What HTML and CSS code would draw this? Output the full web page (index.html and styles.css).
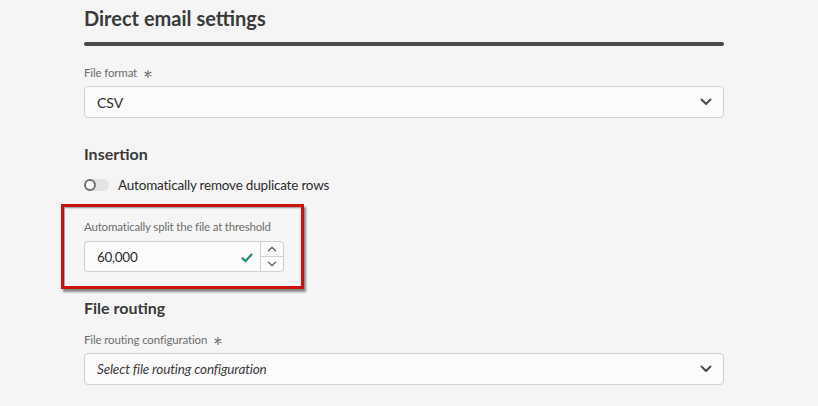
FILE: index.html
```html
<!DOCTYPE html>
<html lang="en">
<head>
<meta charset="utf-8">
<title>Direct email settings</title>
<link rel="stylesheet" href="styles.css">
</head>
<body>
<main class="page">
  <h1 class="title">Direct email settings</h1>
  <div class="divider"></div>

  <div class="field field-format">
    <label class="label">File format <svg class="req" width="8" height="8" viewBox="0 0 8 8"><path d="M4 0.6 V7.4 M1.05 2.3 L6.95 5.7 M1.05 5.7 L6.95 2.3" stroke="#6e6e6e" stroke-width="1.2" stroke-linecap="round"/></svg></label>
    <div class="select">
      <span class="select-value">CSV</span>
      <svg class="chevron" width="12" height="8" viewBox="0 0 12 8"><path d="M1.5 1.5 L6 6 L10.5 1.5" fill="none" stroke="#4b4b4b" stroke-width="2" stroke-linecap="round" stroke-linejoin="round"/></svg>
    </div>
  </div>

  <h2 class="section">Insertion</h2>
  <div class="toggle-row">
    <span class="toggle"><span class="handle"></span></span>
    <span class="toggle-text">Automatically remove duplicate rows</span>
  </div>

  <div class="field field-threshold">
    <div class="highlight"></div>
    <label class="label">Automatically split the file at threshold</label>
    <div class="number">
      <div class="number-input">
        <span class="number-value">60,000</span>
        <svg class="check" width="12" height="10" viewBox="0 0 12 10"><path d="M1.5 5.2 L4.5 8.2 L10.5 1.5" fill="none" stroke="#268e6c" stroke-width="2.2" stroke-linecap="round" stroke-linejoin="round"/></svg>
      </div>
      <div class="stepper">
        <span class="step step-up"><svg width="10" height="6" viewBox="0 0 10 6"><path d="M1.5 4.8 L5 1.3 L8.5 4.8" fill="none" stroke="#6e6e6e" stroke-width="1.5" stroke-linecap="round" stroke-linejoin="round"/></svg></span>
        <span class="step step-down"><svg width="10" height="6" viewBox="0 0 10 6"><path d="M1.5 1.2 L5 4.7 L8.5 1.2" fill="none" stroke="#6e6e6e" stroke-width="1.5" stroke-linecap="round" stroke-linejoin="round"/></svg></span>
      </div>
    </div>
  </div>

  <h2 class="section section-routing">File routing</h2>
  <div class="field field-routing">
    <label class="label">File routing configuration <svg class="req" width="8" height="8" viewBox="0 0 8 8"><path d="M4 0.6 V7.4 M1.05 2.3 L6.95 5.7 M1.05 5.7 L6.95 2.3" stroke="#6e6e6e" stroke-width="1.2" stroke-linecap="round"/></svg></label>
    <div class="select">
      <span class="select-placeholder">Select file routing configuration</span>
      <svg class="chevron" width="12" height="8" viewBox="0 0 12 8"><path d="M1.5 1.5 L6 6 L10.5 1.5" fill="none" stroke="#4b4b4b" stroke-width="2" stroke-linecap="round" stroke-linejoin="round"/></svg>
    </div>
  </div>
</main>
</body>
</html>
```
FILE: styles.css
```css
html, body {
  margin: 0;
  padding: 0;
  background: #f5f5f5;
}
body {
  font-family: "Lato", "Noto Sans", sans-serif;
  color: #2c2c2c;
  height: 406px;
  overflow: hidden;
}
.page {
  width: 640px;
  padding-left: 84px;
  padding-top: 4px;
}
.title {
  margin: 0;
  font-size: 20px;
  line-height: 28px;
  font-weight: 700;
  color: #3a3a3a;
}
.divider {
  margin-top: 10px;
  height: 4px;
  border-radius: 2px;
  background: #4b4b4b;
}
.field {
  display: flex;
  flex-direction: column;
}
.field-format {
  margin-top: 19px;
}
.label {
  font-size: 11.5px;
  letter-spacing: -0.15px;
  line-height: 16px;
  color: #6e6e6e;
  margin-bottom: 5px;
}
.req {
  margin-left: 4px;
  vertical-align: -0.5px;
}
.select {
  box-sizing: border-box;
  height: 32px;
  background: #fbfbfb;
  border: 1px solid #d0d0d0;
  border-radius: 4px;
  display: flex;
  align-items: center;
  justify-content: space-between;
  padding: 0 11px 0 12px;
}
.select-value {
  font-size: 14px;
  color: #2c2c2c;
}
.select-placeholder {
  font-size: 13.5px;
  letter-spacing: -0.15px;
  font-style: italic;
  color: #3a3a3a;
}
.section {
  margin: 26px 0 0;
  font-size: 16px;
  line-height: 20px;
  font-weight: 700;
  color: #3a3a3a;
}
.toggle-row {
  margin-top: 11px;
  height: 20px;
  display: flex;
  align-items: center;
  gap: 9px;
}
.toggle {
  width: 25px;
  height: 12px;
  border-radius: 6px;
  background: #e3e3e3;
  display: flex;
  align-items: center;
}
.handle {
  box-sizing: border-box;
  width: 12px;
  height: 12px;
  border-radius: 50%;
  border: 2px solid #707070;
  background: #ffffff;
}
.toggle-text {
  font-size: 13.5px;
  letter-spacing: -0.2px;
  color: #2c2c2c;
}
.field-threshold {
  position: relative;
  margin-top: 24px;
}
.highlight {
  position: absolute;
  left: -23px;
  top: -15px;
  width: 243px;
  height: 85px;
  box-sizing: border-box;
  border: 3px solid #c8120c;
  box-shadow: inset 1px 1px 0 #a8a8a8, inset 0 2px 1px rgba(0,0,0,0.12), 2px 3px 2px rgba(0,0,0,0.45);
  pointer-events: none;
}
.field-threshold .label {
  letter-spacing: -0.18px;
  margin-bottom: 6px;
}
.number {
  display: flex;
  width: 200px;
  height: 31px;
}
.number-input {
  box-sizing: border-box;
  flex: 1;
  background: #fbfbfb;
  border: 1px solid #d0d0d0;
  border-right: none;
  border-radius: 4px 0 0 4px;
  display: flex;
  align-items: center;
  justify-content: space-between;
  padding: 0 7px 0 12px;
}
.number-value {
  font-size: 13.5px;
  letter-spacing: -0.3px;
  color: #2c2c2c;
}
.check {
  margin-top: 2px;
}
.stepper {
  box-sizing: border-box;
  width: 24px;
  border: 1px solid #d0d0d0;
  border-radius: 0 4px 4px 0;
  background: #fbfbfb;
  display: flex;
  flex-direction: column;
}
.step {
  flex: 1;
  display: flex;
  align-items: center;
  justify-content: center;
}
.step-up {
  border-bottom: 1px solid #d0d0d0;
}
.section-routing {
  margin-top: 26px;
}
.field-routing {
  margin-top: 14px;
}
.field-routing .label {
  margin-bottom: 5px;
}
```
